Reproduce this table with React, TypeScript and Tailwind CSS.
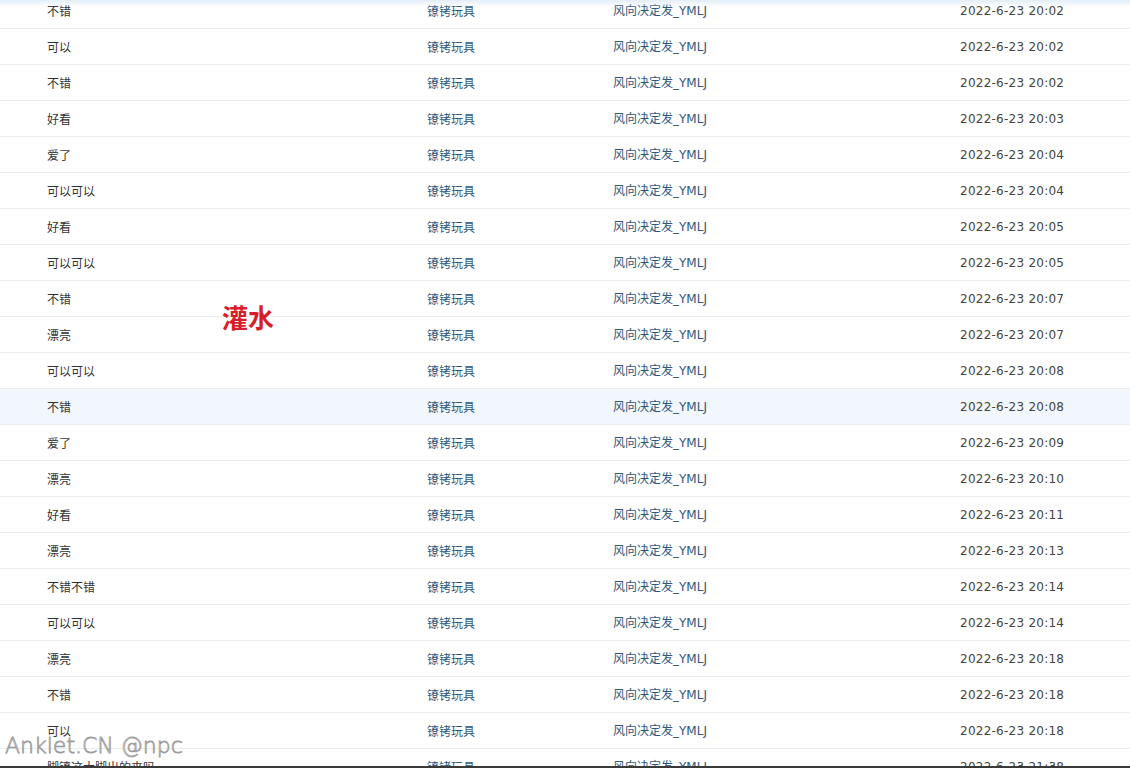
import React from 'react';

const rows = [
  { text: "不错", time: "20:02" },
  { text: "可以", time: "20:02" },
  { text: "不错", time: "20:02" },
  { text: "好看", time: "20:03" },
  { text: "爱了", time: "20:04" },
  { text: "可以可以", time: "20:04" },
  { text: "好看", time: "20:05" },
  { text: "可以可以", time: "20:05" },
  { text: "不错", time: "20:07" },
  { text: "漂亮", time: "20:07" },
  { text: "可以可以", time: "20:08" },
  { text: "不错", time: "20:08" },
  { text: "爱了", time: "20:09" },
  { text: "漂亮", time: "20:10" },
  { text: "好看", time: "20:11" },
  { text: "漂亮", time: "20:13" },
  { text: "不错不错", time: "20:14" },
  { text: "可以可以", time: "20:14" },
  { text: "漂亮", time: "20:18" },
  { text: "不错", time: "20:18" },
  { text: "可以", time: "20:18" },
  { text: "脚镣这大脚出的来吗", time: "21:38" }
];

const cjk = "font-['Noto_Sans_CJK_SC',sans-serif]";

export default function App() {
  return (
    <div className="relative w-[1130px] h-[768px] overflow-hidden bg-white">
      <div className="-mt-[7px]">
        {rows.map((row, i) => (
          <div
            key={i}
            className={`flex items-center h-9 border-b border-[#ececec] text-[12px] ${i === 11 ? 'bg-[#f1f7fc]' : 'bg-white'}`}
          >
            <div className={`w-[427px] pl-[47px] text-[#333] ${cjk}`}>{row.text}</div>
            <div className={`w-[186px] text-[#30577a] ${cjk}`}>镣铐玩具</div>
            <div className="w-[347px] text-[#30577a] font-['Noto_Sans_CJK_SC',sans-serif]">
              风向决定发<span className="font-['DejaVu_Sans',sans-serif]">_YMLJ</span>
            </div>
            <div className="flex-1 text-[#444] font-['DejaVu_Sans',sans-serif] tracking-[0.25px]">2022-6-23 {row.time}</div>
          </div>
        ))}
      </div>

      <div className="absolute top-0 left-0 right-0 h-[7px] bg-gradient-to-b from-[#e3edf7] to-transparent" />

      <div className={`absolute left-[222px] top-[304px] text-[26px] leading-none font-bold text-[#d81e2a] ${cjk}`}>
        灌水
      </div>

      <div
        className="absolute left-[5px] top-[735px] text-[22px] leading-none font-extralight text-white font-['DejaVu_Sans',sans-serif]"
        style={{ WebkitTextStroke: '0.8px #9a9a9a' }}
      >
        Anklet.CN @npc
      </div>

      <div className="absolute bottom-0 left-0 right-0 h-[2px] bg-[#3a3a3a]" />
    </div>
  );
}
